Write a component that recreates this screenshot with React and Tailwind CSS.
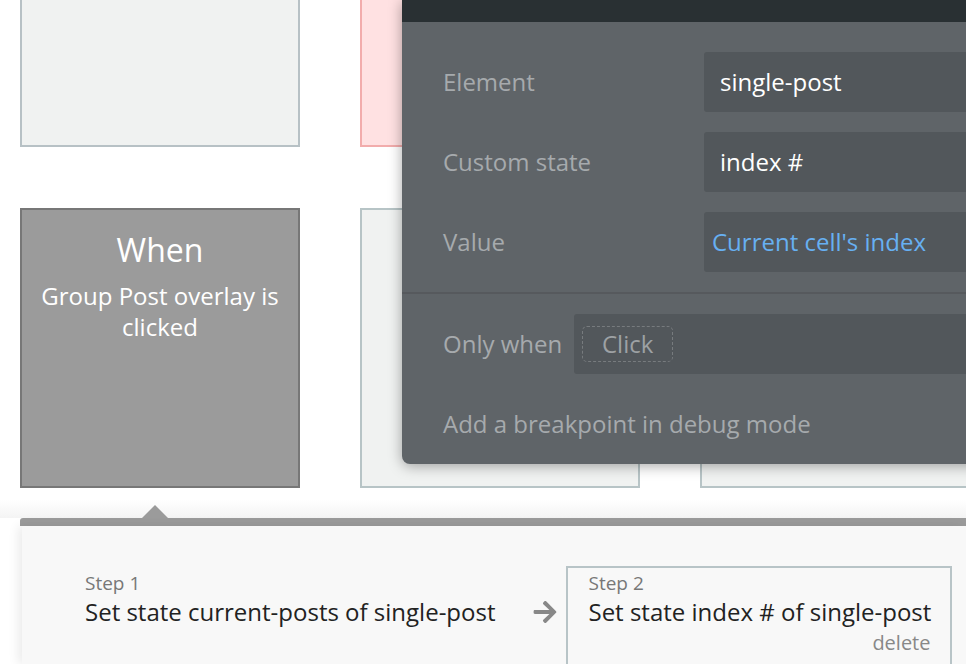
import { FaArrowRight } from "react-icons/fa";

const font = { fontFamily: "'Open Sans', 'Liberation Sans', sans-serif" };

function Field({ label, children, tone = "text-white" }) {
  return (
    <div className="flex items-center h-[60px]">
      <div className="w-[302px] pl-[41px] text-[24px] text-[#a6aaad]">{label}</div>
      <div className={`flex-1 h-full bg-[#52575b] rounded-[3px] flex items-center pl-4 text-[24px] ${tone}`}>
        {children}
      </div>
    </div>
  );
}

function Panel() {
  return (
    <div className="absolute left-[402px] top-0 w-[620px] h-[464px] bg-[#5f6468] rounded-bl-[8px] shadow-[0_2px_14px_rgba(0,0,0,0.35)] flex flex-col">
      <div className="h-[22px] bg-[#293033]" />
      <div className="flex flex-col gap-5 pt-[30px]">
        <Field label="Element">single-post</Field>
        <Field label="Custom state">index #</Field>
        <Field label="Value" tone="text-[#67b0f2]">
          <span className="-ml-2">Current cell's index</span>
        </Field>
      </div>
      <div className="mt-5 border-t-2 border-[#56595d]" />
      <div className="flex items-center h-[60px] mt-5">
        <div className="pl-[41px] w-[172px] text-[24px] text-[#a6aaad] whitespace-nowrap">Only when</div>
        <div className="flex-1 h-full bg-[#52575b] rounded-[3px] flex items-center pl-2">
          <div className="h-9 px-[19px] flex items-center border border-dashed border-[#777b7e] rounded-[5px] text-[24px] text-[#9da1a4]">
            Click
          </div>
        </div>
      </div>
      <div className="pl-[41px] mt-[32px] text-[24px] text-[#a6aaad]">Add a breakpoint in debug mode</div>
    </div>
  );
}

export default function App() {
  return (
    <div className="relative w-[966px] h-[664px] overflow-hidden bg-white" style={font}>
      <div className="pl-5 grid grid-cols-[280px_280px_280px] gap-x-[60px] gap-y-[61px]">
        <div className="h-[147px] bg-[#f0f2f1] border-2 border-t-0 border-[#b7c1c5]" />
        <div className="h-[147px] bg-[#ffe1e2] border-2 border-t-0 border-[#f2acac]" />
        <div className="h-[147px]" />
        <div className="h-[280px] bg-[#9b9b9b] border-2 border-[#777] flex flex-col items-center text-white text-center pt-5">
          <div className="text-[32px] leading-[40px]">When</div>
          <div className="text-[24px] leading-[31px] mt-[10px] px-2">Group Post overlay is clicked</div>
        </div>
        <div className="h-[280px] bg-[#f0f2f1] border-2 border-[#b7c4c6]" />
        <div className="h-[280px] bg-[#f0f2f1] border-2 border-[#b7c4c6]" />
      </div>

      <div className="h-[30px] bg-gradient-to-b from-white from-40% to-[#f4f4f4]" />
      <div className="relative ml-5">
        <div className="absolute left-[122px] -top-[13px] w-0 h-0 border-x-[13px] border-x-transparent border-b-[13px] border-b-[#9b9b9b]" />
        <div className="h-2 bg-[#9b9b9b] rounded-tl-[3px]" />
        <div className="ml-[2px] h-[138px] bg-[#f8f8f8] shadow-[-4px_0_10px_rgba(0,0,0,0.08)] flex items-start pt-10">
          <div className="pl-[63px] pt-[6px] whitespace-nowrap">
            <div className="text-[19px] leading-[22px] text-[#777]">Step 1</div>
            <div className="text-[24px] leading-[36px] text-[#222]">Set state current-posts of single-post</div>
          </div>
          <FaArrowRight className="ml-[37px] mt-[33px] shrink-0 text-[#888] w-[26px] h-[26px]" />
          <div className="ml-2 w-[386px] h-[100px] shrink-0 border-2 border-[#b8c4c7] pl-5 pr-5 pt-[4px] whitespace-nowrap">
            <div className="text-[19px] leading-[22px] text-[#777]">Step 2</div>
            <div className="text-[24px] leading-[36px] text-[#222]">Set state index # of single-post</div>
            <div className="text-right text-[20px] leading-[26px] text-[#888]">delete</div>
          </div>
        </div>
      </div>

      <Panel />
    </div>
  );
}
